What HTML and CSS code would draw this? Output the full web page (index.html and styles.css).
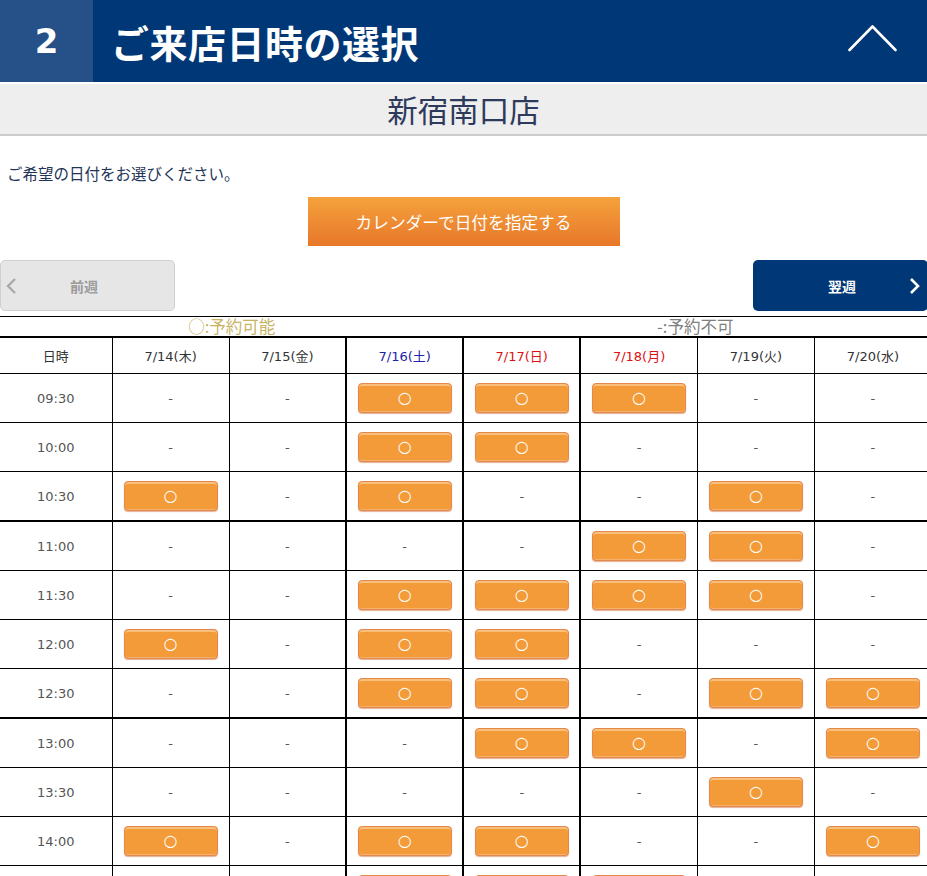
FILE: index.html
```html
<!DOCTYPE html>
<html lang="ja">
<head>
<meta charset="utf-8">
<title>ご来店日時の選択</title>
<link rel="stylesheet" href="styles.css">
</head>
<body>
<div class="page">
  <header class="step-head">
    <div class="step-num">2</div>
    <h1 class="step-title">ご来店日時の選択</h1>
    <svg class="step-toggle" width="50" height="30" viewBox="0 0 50 30"><polyline points="1.5,26 24.5,2.5 47.5,26" fill="none" stroke="#fff" stroke-width="2.6" stroke-linecap="round" stroke-linejoin="round"/></svg>
  </header>
  <div class="store-bar">新宿南口店</div>
  <p class="intro">ご希望の日付をお選びください。</p>
  <div class="cal-wrap"><a class="cal-btn">カレンダーで日付を指定する</a></div>
  <div class="week-nav">
    <a class="week-btn prev">
      <svg class="chev" width="12" height="18" viewBox="0 0 12 18"><polyline points="10,2 3,9 10,16" fill="none" stroke="#aaa" stroke-width="2.4"/></svg>
      <span>前週</span>
    </a>
    <a class="week-btn next">
      <span>翌週</span>
      <svg class="chev" width="12" height="18" viewBox="0 0 12 18"><polyline points="2,2 9,9 2,16" fill="none" stroke="#fff" stroke-width="2.6"/></svg>
    </a>
  </div>
  <div class="legend">
    <span class="legend-ok">○:予約可能</span>
    <span class="legend-ng">-:予約不可</span>
  </div>
  <div class="table-wrap">
    <table class="sched">
      <colgroup>
        <col class="c-time"><col class="c-day"><col class="c-day"><col class="c-day"><col class="c-day"><col class="c-day"><col class="c-day"><col class="c-day">
      </colgroup>
      <thead>
        <tr class="head-row">
          <th>日時</th><th>7/14(木)</th><th>7/15(金)</th><th class="sat bl">7/16(土)</th><th class="sun bl">7/17(日)</th><th class="sun bl">7/18(月)</th><th>7/19(火)</th><th>7/20(水)</th>
        </tr>
      </thead>
      <tbody id="rows"></tbody>
    </table>
  </div>
</div>
<script src="app.js"></script>
</body>
</html>
```
FILE: app.js
```js
const data = [
  ["09:30", "--ooo--", false],
  ["10:00", "--oo---", false],
  ["10:30", "o-o--o-", false],
  ["11:00", "----oo-", true],
  ["11:30", "--oooo-", false],
  ["12:00", "o-oo---", false],
  ["12:30", "--oo-oo", false],
  ["13:00", "---oo-o", true],
  ["13:30", "-----o-", false],
  ["14:00", "o-oo--o", false],
  ["14:30", "--ooo--", false]
];
const tbody = document.getElementById("rows");
data.forEach(([time, slots, thick]) => {
  const tr = document.createElement("tr");
  if (thick) tr.className = "thick";
  let html = `<td class="time">${time}</td>`;
  [...slots].forEach((s, i) => {
    const cls = (i >= 2 && i <= 4) ? ' class="bl"' : '';
    html += s === "o"
      ? `<td${cls}><a class="slot">○</a></td>`
      : `<td${cls}><span class="na">-</span></td>`;
  });
  tr.innerHTML = html;
  tbody.appendChild(tr);
});
```
FILE: styles.css
```css
html, body { margin: 0; padding: 0; background: #fff; }
body { font-family: "DejaVu Sans", "Noto Sans CJK JP", sans-serif; overflow: hidden; }
.page { width: 927px; overflow: hidden; }

.step-head { height: 82px; background: #003776; display: flex; align-items: center; color: #fff; }
.step-num { width: 93px; height: 82px; background: #255088; display: flex; align-items: center; justify-content: center; font-family: "DejaVu Sans", sans-serif; font-weight: bold; font-size: 34px; }
.step-title { margin: 0 0 0 18px; font-family: "Noto Sans CJK JP", sans-serif; font-weight: bold; font-size: 38px; letter-spacing: 0.5px; flex: 1; }
.step-toggle { margin-right: 29px; margin-top: -4px; }

.store-bar { margin-top: 2px; height: 50px; background: #eeeeee; border-bottom: 2px solid #cccccc; display: flex; align-items: center; justify-content: center; font-family: "Noto Sans CJK JP", sans-serif; font-size: 30.5px; color: #2d3a5c; }

.intro { margin: 27px 0 0 7px; font-family: "Noto Sans CJK JP", sans-serif; font-size: 15.5px; line-height: 20px; color: #1e3558; }

.cal-wrap { display: flex; justify-content: center; margin-top: 14px; }
.cal-btn { width: 312px; height: 49px; display: flex; align-items: center; justify-content: center; background: linear-gradient(#f4a23c, #e8772a); color: #fff; font-family: "Noto Sans CJK JP", sans-serif; font-size: 16.7px; }

.week-nav { display: flex; justify-content: space-between; margin-top: 14px; height: 51px; }
.week-btn { width: 175px; height: 51px; box-sizing: border-box; border-radius: 5px; display: flex; align-items: center; position: relative; font-family: "Noto Sans CJK JP", sans-serif; font-weight: bold; font-size: 14px; }
.week-btn.prev { background: #e6e6e6; border: 1px solid #cfcfcf; color: #9a9a9a; }
.week-btn.prev .chev { margin-left: 4px; }
.week-btn.prev span { margin-left: 53px; }
.week-btn.next { background: #003776; color: #fff; margin-right: -1px; }
.week-btn.next span { margin-left: 75px; }
.week-btn.next .chev { margin-left: 53px; }

.legend { margin-top: 5px; border-top: 1px solid #000; height: 19px; display: flex; font-family: "Noto Sans CJK JP", sans-serif; font-size: 16.5px; line-height: 19px; }
.legend span { flex: 1; text-align: center; }
.legend-ok { color: #c8b466; }
.legend-ng { color: #808080; }

.table-wrap { width: 927px; overflow: hidden; }
.sched { border-collapse: collapse; table-layout: fixed; width: 932px; font-size: 13px; color: #333; }
.c-time { width: 112px; }
.c-day { width: 117px; }
.sched th, .sched td { border: 1px solid #000; padding: 0; text-align: center; vertical-align: middle; }
.sched thead th { border-top: 2px solid #000; font-weight: normal; height: 35px; }
.sched th:first-child, .sched td:first-child { border-left: 0; }
.sched .bl { border-left-width: 2px; }
.sched tr.thick td { border-top-width: 2px; }
.sched tbody td { height: 48px; }
.sched .sat { color: #2222aa; }
.sched .sun { color: #dd1111; }
.time { color: #555; }
.na { color: #555; }
.slot { display: inline-flex; align-items: center; justify-content: center; width: 94px; height: 30px; box-sizing: border-box; background: #f39b38; border: 1px solid #e5894a; border-radius: 4px; box-shadow: inset 0 2px 0 #f8c07c, inset 0 -1px 0 #f6b070, 0 1px 1px rgba(200,100,40,0.5); color: #fff; font-size: 16px; line-height: 1; vertical-align: middle; }
```
